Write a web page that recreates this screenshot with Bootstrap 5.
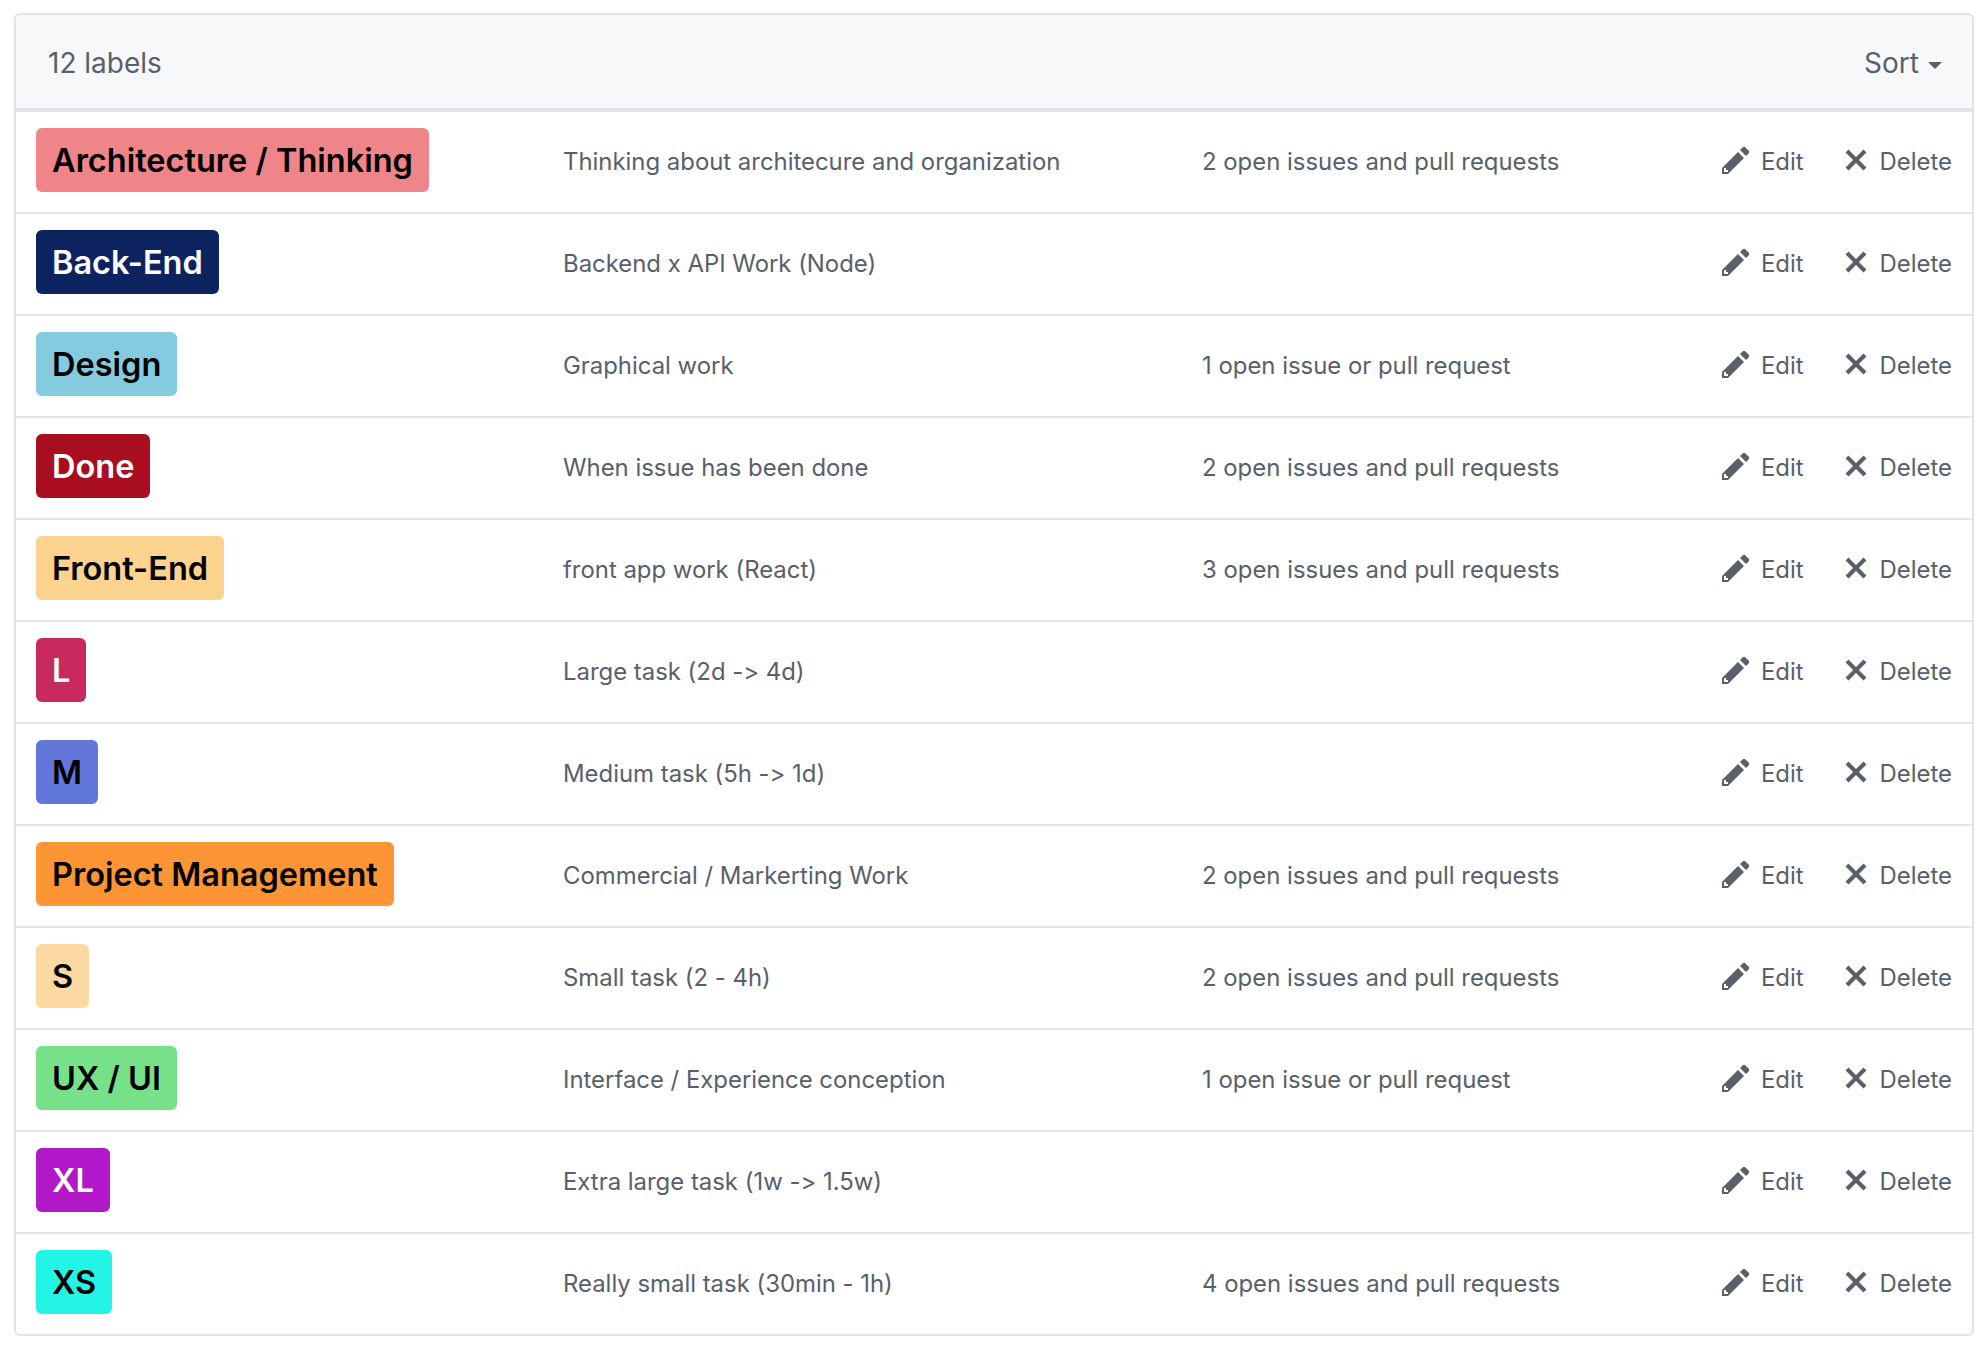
<!DOCTYPE html>
<html lang="en">
<head>
  <meta charset="UTF-8" />
  <meta name="viewport" content="width=device-width, initial-scale=1.0"/>
  <title>Labels</title>
  <link href="https://cdn.jsdelivr.net/npm/bootstrap@5.3.0/dist/css/bootstrap.min.css" rel="stylesheet">
  <style>
    body { font-family: Inter, "Liberation Sans", sans-serif; font-feature-settings: "calt" 0; background: #fff; color: #586069; padding: 13px 12px 0 14px; }
    .labels-box { border: 2px solid #e1e4e8; border-radius: 6px; overflow: hidden; }
    .labels-head { height: 97px; background: #f6f8fa; border-bottom: 4px solid #e1e4e8; padding: 2px 30px 0 32px; font-size: 28px; color: #586069; }
    .sort-toggle { color: #586069; }
    .sort-toggle::after { border-top-width: 7px; border-left-width: 7.5px; border-right-width: 7.5px; margin-left: 9px; vertical-align: 4px; }
    .label-row { height: 102px; border-bottom: 2px solid #e1e4e8; padding: 0 20px; font-size: 23.9px; color: #586069; }
    .label-row:last-child { border-bottom: 0; height: 100px; }
    .label-cell { width: 527px; flex: none; margin-bottom: 4px; }
    .desc-cell { width: 639px; flex: none; }
    .count-cell { flex: 1 1 auto; }
    .issue-tag { display: inline-block; height: 64px; line-height: 66px; padding: 0 16px; border-radius: 6px; font-size: 32.5px; font-weight: 600; }
    .action-link { color: #586069; text-decoration: none; }
    .action-link svg { fill: #586069; display: block; margin-bottom: 4px; }
    .edit-link { gap: 11px; margin-right: 40px; }
    .delete-link { gap: 12px; }
  </style>
</head>
<body>

<div class="labels-box" id="labelsBox">
  <div class="labels-head d-flex justify-content-between align-items-center">
    <span>12 labels</span>
    <span class="sort-toggle dropdown-toggle">Sort</span>
  </div>
  <div id="labelRows"></div>
</div>

<script>
const labels = [
  { name: "Architecture / Thinking", bg: "#f08589", fg: "#000", desc: "Thinking about architecure and organization", count: "2 open issues and pull requests" },
  { name: "Back-End", bg: "#0d2360", fg: "#fff", desc: "Backend x API Work (Node)", count: "" },
  { name: "Design", bg: "#84cbdf", fg: "#000", desc: "Graphical work", count: "1 open issue or pull request" },
  { name: "Done", bg: "#a90e20", fg: "#fff", desc: "When issue has been done", count: "2 open issues and pull requests" },
  { name: "Front-End", bg: "#fbd38e", fg: "#000", desc: "front app work (React)", count: "3 open issues and pull requests" },
  { name: "L", bg: "#c92a5e", fg: "#fff", desc: "Large task (2d -> 4d)", count: "" },
  { name: "M", bg: "#6277da", fg: "#000", desc: "Medium task (5h -> 1d)", count: "" },
  { name: "Project Management", bg: "#fd9534", fg: "#000", desc: "Commercial / Markerting Work", count: "2 open issues and pull requests" },
  { name: "S", bg: "#fbd9a0", fg: "#000", desc: "Small task (2 - 4h)", count: "2 open issues and pull requests" },
  { name: "UX / UI", bg: "#77e18a", fg: "#000", desc: "Interface / Experience conception", count: "1 open issue or pull request" },
  { name: "XL", bg: "#b018c8", fg: "#fff", desc: "Extra large task (1w -> 1.5w)", count: "" },
  { name: "XS", bg: "#22f5e6", fg: "#000", desc: "Really small task (30min - 1h)", count: "4 open issues and pull requests" }
];

const pencil = '<svg width="28" height="32" viewBox="0 0 14 16"><path d="M0 12v3h3l8-8-3-3-8 8zm3 2H1v-2h1v1h1v1zm10.3-9.3L12 6 9 3l1.3-1.3a.996.996 0 0 1 1.41 0l1.59 1.59c.39.39.39 1.02 0 1.41z"/></svg>';
const cross = '<svg width="24" height="32" viewBox="0 0 12 16"><path d="M7.48 8l3.75 3.75-1.48 1.48L6 9.48l-3.75 3.75-1.48-1.48L4.52 8 .77 4.25l1.48-1.48L6 6.52l3.75-3.75 1.48 1.48L7.48 8z"/></svg>';

const rows = document.getElementById("labelRows");
labels.forEach(l => {
  const div = document.createElement("div");
  div.className = "label-row d-flex align-items-center";
  div.innerHTML = `
    <div class="label-cell"><span class="issue-tag" style="background:${l.bg};color:${l.fg}">${l.name}</span></div>
    <div class="desc-cell">${l.desc.replace(/>/g, "&gt;")}</div>
    <div class="count-cell">${l.count}</div>
    <a class="action-link edit-link d-flex align-items-center" href="#">${pencil}<span>Edit</span></a>
    <a class="action-link delete-link d-flex align-items-center" href="#">${cross}<span>Delete</span></a>
  `;
  rows.appendChild(div);
});
</script>
<script src="https://cdn.jsdelivr.net/npm/bootstrap@5.3.0/dist/js/bootstrap.bundle.min.js"></script>
</body>
</html>
